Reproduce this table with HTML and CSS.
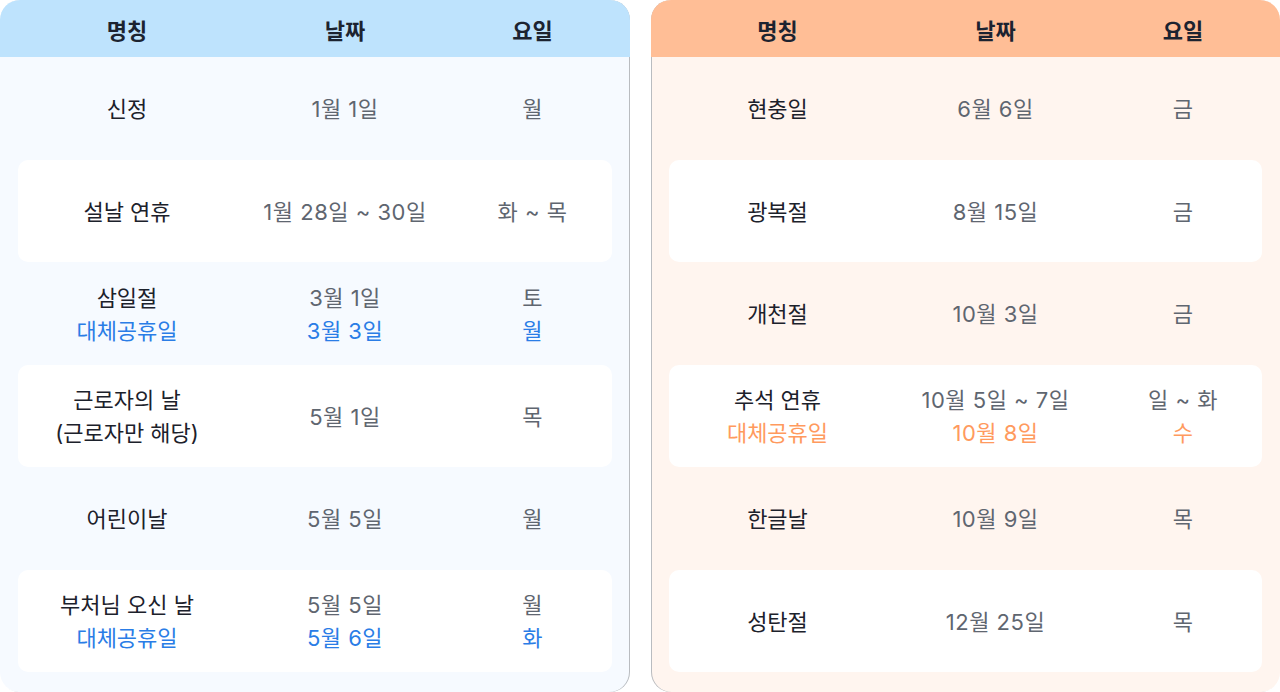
FILE: index.html
```html
<!DOCTYPE html>
<html lang="ko">
<head>
<meta charset="utf-8">
<link rel="stylesheet" href="styles.css">
</head>
<body>
<div class="wrap">
  <section class="panel blue">
    <div class="head row"><div>명칭</div><div>날짜</div><div>요일</div></div>
    <div class="body">
      <div class="row"><div class="name">신정</div><div class="date">1월 1일</div><div class="date">월</div></div>
      <div class="row card"><div class="name">설날 연휴</div><div class="date">1월 28일 ~ 30일</div><div class="date">화 ~ 목</div></div>
      <div class="row"><div class="name">삼일절<br><span class="hl">대체공휴일</span></div><div class="date">3월 1일<br><span class="hl">3월 3일</span></div><div class="date">토<br><span class="hl">월</span></div></div>
      <div class="row card"><div class="name">근로자의 날<br>(근로자만 해당)</div><div class="date">5월 1일</div><div class="date">목</div></div>
      <div class="row"><div class="name">어린이날</div><div class="date">5월 5일</div><div class="date">월</div></div>
      <div class="row card"><div class="name">부처님 오신 날<br><span class="hl">대체공휴일</span></div><div class="date">5월 5일<br><span class="hl">5월 6일</span></div><div class="date">월<br><span class="hl">화</span></div></div>
    </div>
  </section>
  <section class="panel orange">
    <div class="head row"><div>명칭</div><div>날짜</div><div>요일</div></div>
    <div class="body">
      <div class="row"><div class="name">현충일</div><div class="date">6월 6일</div><div class="date">금</div></div>
      <div class="row card"><div class="name">광복절</div><div class="date">8월 15일</div><div class="date">금</div></div>
      <div class="row"><div class="name">개천절</div><div class="date">10월 3일</div><div class="date">금</div></div>
      <div class="row card"><div class="name">추석 연휴<br><span class="hl">대체공휴일</span></div><div class="date">10월 5일 ~ 7일<br><span class="hl">10월 8일</span></div><div class="date">일 ~ 화<br><span class="hl">수</span></div></div>
      <div class="row"><div class="name">한글날</div><div class="date">10월 9일</div><div class="date">목</div></div>
      <div class="row card"><div class="name">성탄절</div><div class="date">12월 25일</div><div class="date">목</div></div>
    </div>
  </section>
</div>
</body>
</html>
```

FILE: styles.css
```css
* { box-sizing: border-box; margin: 0; padding: 0; }
html, body { width: 1280px; height: 692px; overflow: hidden; background: #ffffff; }
body { font-family: Inter, "Noto Sans CJK KR", "Noto Sans", sans-serif; }
.wrap {
  display: flex;
  gap: 21px;
  width: 1280px;
  height: 692px;
}
.panel {
  flex: 1 1 0;
  height: 692px;
  border-radius: 20px;
  overflow: hidden;
  display: flex;
  flex-direction: column;
}
.panel.blue { background: #f6faff; box-shadow: inset -1px 0 0 #b9bcc0; }
.panel.orange { background: #fff5ef; box-shadow: inset 1px 0 0 #b9bcc0; }
.row {
  display: grid;
  grid-template-columns: 218px 218px 157px;
  align-items: center;
  text-align: center;
}
.head {
  height: 57px;
  font-size: 22px;
  font-weight: 700;
  color: #1c2330;
  padding: 0 18px;
}
.blue .head { background: #bee3fd; }
.orange .head { background: #ffbe96; }
.body {
  display: flex;
  flex-direction: column;
  padding: 0 18px;
}
.body .row {
  height: 103px;
  font-size: 22px;
  line-height: 33px;
  padding-top: 2px;
}
.body .row.card { background: #ffffff; border-radius: 10px; height: 102px; }
.name { color: #1c212b; }
.date { color: #5f6670; letter-spacing: 0.5px; }
.blue .hl { color: #2a7de6; }
.orange .hl { color: #ff9a5e; }
```
